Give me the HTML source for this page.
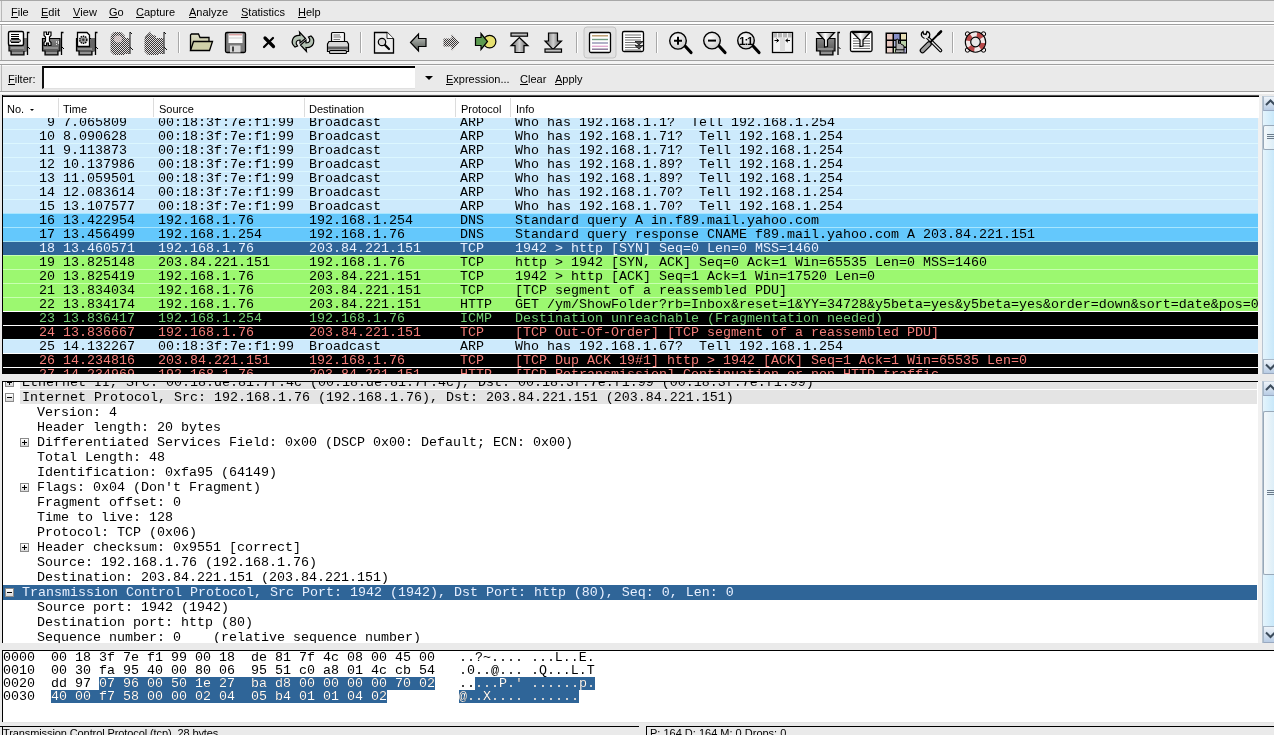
<!DOCTYPE html>
<html><head><meta charset="utf-8"><title>Wireshark</title><style>
*{margin:0;padding:0;box-sizing:border-box}
html,body{width:1274px;height:735px;overflow:hidden;background:#eaeaea;font-family:"Liberation Sans",sans-serif;font-size:11px;color:#000}
body{position:relative;will-change:transform}
.a{position:absolute}
.t{position:absolute;white-space:pre;line-height:13px}
.m{font-family:"Liberation Mono",monospace;font-size:13.33px}
u{text-decoration:none;position:relative}
u:after{content:"";position:absolute;left:0;right:0;bottom:0px;height:1px;background:#000}
.r{position:absolute;left:1px;width:1255px;height:14px;line-height:14px;white-space:pre;font-family:"Liberation Mono",monospace;font-size:13.33px}
.r b{font-weight:normal;position:absolute;top:0}
.arp{background:#cdeafc;color:#000}
.dns{background:#64c8fc;color:#000}
.sel{background:#2f6598;color:#eaf2ff}
.tcp{background:#9cf870;color:#000}
.icmp{background:#000;color:#76d076}
.bad{background:#000;color:#f47f7a}
.sep{position:absolute;left:1px;width:1255px;height:1px}
.d{position:absolute;left:1px;width:1254px;height:14px;line-height:14px;white-space:pre;font-family:"Liberation Mono",monospace;font-size:13.33px}
.d b{font-weight:normal;position:absolute;top:1px}
.d.hl:before{content:"";position:absolute;left:17px;right:0;top:0;bottom:0;background:#e4e4e4}
.d.sel{background:#2f6598;color:#e8f0ff}
.ex{position:absolute;top:3px;width:9px;height:9px;border:1px solid #8a8a8a;background:linear-gradient(#fff,#d8d8d8)}
.ex:before{content:"";position:absolute;left:1px;top:3px;width:5px;height:1px;background:#000}
.ex.plus:after{content:"";position:absolute;left:3px;top:1px;width:1px;height:5px;background:#000}
.hx{position:absolute;white-space:pre;line-height:13px;font-family:"Liberation Mono",monospace;font-size:13.33px}
.hs{position:absolute;background:#2f6598;height:13px}
</style></head><body>
<div class="a" style="left:0;top:0;width:1274px;height:1px;background:#a8a8a8"></div>
<div class="a" style="left:1px;top:1px;width:1px;height:20px;background:#b8b8b8"></div>
<div class="a" style="left:0;top:21px;width:1274px;height:1px;background:#a0a0a0"></div>
<div class="a" style="left:0;top:22px;width:1274px;height:2px;background:#fff"></div>
<div class="a" style="left:0;top:24px;width:1274px;height:1px;background:#a0a0a0"></div>
<div class="a" style="left:0;top:25px;width:1274px;height:1px;background:#fafafa"></div>
<div class="t" style="left:11px;top:6px"><u>F</u>ile</div>
<div class="t" style="left:41px;top:6px"><u>E</u>dit</div>
<div class="t" style="left:73px;top:6px"><u>V</u>iew</div>
<div class="t" style="left:109px;top:6px"><u>G</u>o</div>
<div class="t" style="left:136px;top:6px"><u>C</u>apture</div>
<div class="t" style="left:189px;top:6px"><u>A</u>nalyze</div>
<div class="t" style="left:241px;top:6px"><u>S</u>tatistics</div>
<div class="t" style="left:298px;top:6px"><u>H</u>elp</div>
<div class="a" style="left:1px;top:25px;width:1px;height:35px;background:#b8b8b8"></div>
<div class="a" style="left:0;top:60px;width:1274px;height:1px;background:#a0a0a0"></div>
<div class="a" style="left:0;top:61px;width:1274px;height:3px;background:#f4f4f4"></div>
<div class="a" style="left:0;top:64px;width:1274px;height:1px;background:#a0a0a0"></div>
<div class="a" style="left:0;top:65px;width:1274px;height:1px;background:#fafafa"></div>
<svg class="a" style="left:0;top:0" width="1274" height="62" viewBox="0 0 1274 62">
<defs>
<pattern id="chk" width="2" height="2" patternUnits="userSpaceOnUse"><rect width="2" height="2" fill="#e4dede"/><rect width="1" height="1" fill="#383838"/><rect x="1" y="1" width="1" height="1" fill="#383838"/></pattern>
<linearGradient id="cardg" x1="0" y1="0" x2="0" y2="1"><stop offset="0" stop-color="#888"/><stop offset="1" stop-color="#484848"/></linearGradient>
<linearGradient id="arrg" x1="0" y1="0" x2="0" y2="1"><stop offset="0" stop-color="#c8ccc8"/><stop offset="1" stop-color="#505550"/></linearGradient>
<linearGradient id="arrg2" x1="0" y1="0" x2="1" y2="0"><stop offset="0" stop-color="#606060"/><stop offset=".5" stop-color="#d0d0d0"/><stop offset="1" stop-color="#505050"/></linearGradient>
<radialGradient id="lens" cx=".4" cy=".35" r=".7"><stop offset="0" stop-color="#ffffff"/><stop offset="1" stop-color="#c8c8c8"/></radialGradient>
<linearGradient id="fold" x1="0" y1="0" x2="0" y2="1"><stop offset="0" stop-color="#e0e0c8"/><stop offset="1" stop-color="#b8b890"/></linearGradient>
<linearGradient id="funnel" x1="0" y1="0" x2="1" y2="0"><stop offset="0" stop-color="#707070"/><stop offset=".45" stop-color="#ffffff"/><stop offset="1" stop-color="#808080"/></linearGradient>
</defs>
<!-- separators -->
<g stroke="#a8a8a8" stroke-width="1">
<line x1="178.5" y1="32" x2="178.5" y2="53"/><line x1="360.5" y1="32" x2="360.5" y2="53"/><line x1="576.5" y1="32" x2="576.5" y2="53"/>
<line x1="656.5" y1="32" x2="656.5" y2="53"/><line x1="805.5" y1="32" x2="805.5" y2="53"/><line x1="952.5" y1="32" x2="952.5" y2="53"/>
</g>
<g stroke="#fff" stroke-width="1">
<line x1="179.5" y1="32" x2="179.5" y2="53"/><line x1="361.5" y1="32" x2="361.5" y2="53"/><line x1="577.5" y1="32" x2="577.5" y2="53"/>
<line x1="657.5" y1="32" x2="657.5" y2="53"/><line x1="806.5" y1="32" x2="806.5" y2="53"/><line x1="953.5" y1="32" x2="953.5" y2="53"/>
</g>
<!-- 1 interface list -->
<g transform="translate(4,27)">
<path d="M5 18 H22 V24 H20 V28 H7 V24 H5 Z" fill="url(#cardg)" stroke="#000" stroke-width="1.2"/>
<rect x="19" y="11" width="4" height="13" fill="#777"/>
<line x1="7" y1="21" x2="20" y2="21" stroke="#bbb" stroke-width="1"/>
<line x1="8" y1="26" x2="19" y2="26" stroke="#ccc" stroke-width="1"/>
<rect x="4.5" y="4.5" width="15" height="14" rx="1.5" fill="#fff" stroke="#000" stroke-width="1.4"/>
<g stroke="#000" stroke-width="1"><line x1="7" y1="7.5" x2="15" y2="7.5"/><line x1="7" y1="9.5" x2="15" y2="9.5"/><line x1="7" y1="11.5" x2="15" y2="11.5"/><line x1="7" y1="15.5" x2="15" y2="15.5"/></g>
<rect x="6.5" y="12.5" width="10" height="2.5" rx="1.2" fill="#aaa" stroke="#000" stroke-width=".8"/>
<path d="M23.5 28 V5.5 H25.5" fill="none" stroke="#000" stroke-width="1.3"/>
<path d="M24 20 L26 22" stroke="#000" stroke-width="1"/>
</g>
<!-- 2 capture options -->
<g transform="translate(38,27)">
<path d="M4.5 11.5 H22 V24 H20 V28 H7 V24 H4.5 Z" fill="url(#cardg)" stroke="#000" stroke-width="1.2"/>
<line x1="6" y1="21" x2="20" y2="21" stroke="#bbb"/><line x1="8" y1="26" x2="19" y2="26" stroke="#ccc"/>
<g fill="#ddd"><rect x="18" y="14" width="1" height="2"/><rect x="20" y="14" width="1" height="3"/><rect x="18" y="17" width="1" height="1"/></g>
<path d="M6 5 H8.5 V7.5 H10.5 V5 H13 V8.5 L11.5 10 V14 L13 15.5 V18.5 H10.5 V16 H8.5 V18.5 H6 V15.5 L7.5 14 V10 L6 8.5 Z" fill="#fff" stroke="#000" stroke-width="1.2"/>
<path d="M23.5 28 V5.5 H25.5" fill="none" stroke="#000" stroke-width="1.3"/>
<path d="M24 20 L26 22" stroke="#000" stroke-width="1"/>
</g>
<!-- 3 start capture -->
<g transform="translate(72,27)">
<path d="M4.5 11.5 H22 V24 H20 V28 H7 V24 H4.5 Z" fill="url(#cardg)" stroke="#000" stroke-width="1.2"/>
<rect x="19" y="11" width="4" height="13" fill="#666"/>
<line x1="6" y1="22" x2="20" y2="22" stroke="#bbb"/><line x1="8" y1="26" x2="19" y2="26" stroke="#ccc"/>
<path d="M5.5 5.5 H15 L17.5 8 V19.5 H5.5 Z" fill="#fbfbfb" stroke="#000" stroke-width="1.3"/>
<circle cx="11.3" cy="12.8" r="3.6" fill="#999" stroke="#000" stroke-width="1.4" stroke-dasharray="1.4 .9"/>
<circle cx="11.3" cy="12.8" r="1.2" fill="#333"/>
<path d="M23.5 28 V5.5 H25.5" fill="none" stroke="#000" stroke-width="1.3"/>
<path d="M24 20 L26 22" stroke="#000" stroke-width="1"/>
</g>
<!-- 4 stop (grayed) -->
<g transform="translate(106,27)">
<path d="M8 5 H15 L19 9 V11 H23.5 V27 H19 V28 H8 L4.5 24.5 V12 L5 8 Z" fill="url(#chk)"/>
<ellipse cx="12" cy="12" rx="4" ry="3.5" fill="#e8d8d8" opacity=".75"/>
<path d="M24 5 L26 7 M24 5 V27 M24 20 L27 23" stroke="#111" stroke-width="1" fill="none"/>
</g>
<!-- 5 restart (grayed) -->
<g transform="translate(140,27)">
<path d="M10 4 L11 7 L16 9 V11 H23.5 V27 H19 V28 H8 L4.5 24.5 V12 L5 10 Z" fill="url(#chk)"/>
<path d="M5 11 L10 5" stroke="#777" stroke-width="1"/>
<path d="M24 5 L26 7 M24 5 V27 M24 20 L27 23" stroke="#111" stroke-width="1" fill="none"/>
</g>
<!-- 6 open folder -->
<g>
<path d="M190.5 50.5 V35 L191.5 34 H198.5 L200 37.5 H209 V41.5" fill="url(#fold)" stroke="#000" stroke-width="1.3"/>
<path d="M190.5 50.5 L193.5 41.5 H212.5 L209.5 50.5 Z" fill="#cfd0a8" stroke="#000" stroke-width="1.3"/>
</g>
<!-- 7 save -->
<g>
<rect x="225.5" y="32.5" width="20" height="20" rx="1.5" fill="#7c7c7c" stroke="#000" stroke-width="1.3"/>
<rect x="228.5" y="33.5" width="14" height="9.5" fill="#fbfbfb"/>
<line x1="229" y1="34.8" x2="242" y2="34.8" stroke="#d08080" stroke-width="1"/>
<line x1="229" y1="38" x2="242" y2="38" stroke="#c0c0c0" stroke-width=".8"/>
<rect x="230" y="45.5" width="10.5" height="7" fill="#d8d8d8"/>
<rect x="232" y="46.5" width="2" height="5" fill="#404040"/>
</g>
<!-- 8 close X -->
<g stroke="#000" stroke-linecap="round">
<line x1="265" y1="38" x2="273.5" y2="46.5" stroke-width="3.2"/>
<line x1="273" y1="38" x2="264" y2="47" stroke-width="2.2"/>
</g>
<!-- 9 reload -->
<g stroke="#000" stroke-width="1.2" fill="#b4c2b4">
<path d="M295 47 C290 43 292 35 300 35.5 L299.5 32 L305.5 38.5 L300 43 L300 40 C296 40 295 43 297.5 46 Z"/>
<path d="M311 36 C316 40 314 48 306 47.5 L306.5 51.5 L300.5 45 L306 40 L306 43 C310 43 311 40 308.5 37 Z"/>
</g>
<!-- 10 print -->
<g>
<rect x="331.5" y="32.5" width="13" height="10.5" rx="1" fill="#f4f4f4" stroke="#000" stroke-width="1.2"/>
<g stroke="#666" stroke-width=".9"><line x1="333.5" y1="35" x2="340" y2="35"/><line x1="333.5" y1="37" x2="341" y2="37"/><line x1="333.5" y1="39.5" x2="340" y2="39.5"/><line x1="333.5" y1="41.5" x2="341" y2="41.5"/></g>
<path d="M329 41.5 H347 L348.5 44 V51.5 H327.5 V44 Z" fill="#d8d8d8" stroke="#000" stroke-width="1.2"/>
<rect x="328" y="46.5" width="20" height="3" fill="#606060"/>
<rect x="329.5" y="50.5" width="17" height="3" rx="1" fill="#c8c8c8" stroke="#000" stroke-width="1.1"/>
</g>
<!-- 11 find -->
<g>
<path d="M374.5 32.5 H387 L393.5 39 V53 H374.5 Z" fill="#ececec" stroke="#000" stroke-width="1.3"/>
<path d="M387 32.5 V38.5 H393.5" fill="#fff" stroke="#000" stroke-width=".8"/>
<line x1="384.5" y1="44.5" x2="389" y2="49" stroke="#000" stroke-width="2.2" stroke-linecap="round"/>
<circle cx="382" cy="42" r="3.7" fill="#d8d8d8" stroke="#000" stroke-width="1.2"/>
</g>
<!-- 12 back -->
<path d="M410.5 42.5 L418.5 34 V38.5 H426 V46.5 H418.5 V51 Z" fill="url(#arrg)" stroke="#000" stroke-width="1.2"/>
<!-- 13 forward grayed -->
<path d="M459.5 42.5 L451.5 34 V38.5 H443.5 V46.5 H451.5 V51 Z" fill="url(#chk)"/>
<!-- 14 go to packet -->
<g>
<circle cx="489.6" cy="41.6" r="6.3" fill="#e6e070" stroke="#000" stroke-width="1.2"/>
<path d="M475.5 37.5 H481 V33.5 L487.5 41.5 L481 49.5 V45.5 H475.5 Z" fill="#5c9a50" stroke="#000" stroke-width="1.2"/>
</g>
<!-- 15 first packet -->
<g stroke="#000" stroke-width="1.2">
<rect x="511" y="33" width="16.5" height="3.2" fill="#c0c0c0"/>
<path d="M519.3 37.5 L528 45.7 H524 V52.5 H515 V45.7 H511 Z" fill="url(#arrg2)"/>
</g>
<!-- 16 last packet -->
<g stroke="#000" stroke-width="1.2">
<path d="M548.5 33 H557.5 V41 H561.5 L553 49.5 L545 41 H548.5 Z" fill="url(#arrg2)"/>
<rect x="545" y="49" width="16.5" height="3.2" fill="#c0c0c0"/>
</g>
<!-- 17 colorize (pressed) -->
<rect x="584" y="27" width="32" height="31" rx="3" fill="#e2e2e2" stroke="#c4c4c4" stroke-width="1"/>
<g>
<rect x="589.5" y="32.5" width="21" height="20" rx="1.5" fill="#fff" stroke="#000" stroke-width="1.3"/>
<g stroke-width="1.4"><line x1="592" y1="35.8" x2="608" y2="35.8" stroke="#b89868"/><line x1="592" y1="39.5" x2="608" y2="39.5" stroke="#709a80"/><line x1="592" y1="43" x2="608" y2="43" stroke="#9090b0"/><line x1="592" y1="46.3" x2="608" y2="46.3" stroke="#e0a8d0"/><line x1="592" y1="49.2" x2="608" y2="49.2" stroke="#807090"/></g>
</g>
<!-- 18 autoscroll -->
<g>
<rect x="622.5" y="31.5" width="21" height="20" rx="1.5" fill="#fff" stroke="#000" stroke-width="1.3"/>
<g stroke="#707070" stroke-width="1"><line x1="625" y1="35" x2="641" y2="35"/><line x1="625" y1="37.5" x2="641" y2="37.5"/><line x1="625" y1="40" x2="641" y2="40"/><line x1="625" y1="42.5" x2="636" y2="42.5"/><line x1="625" y1="45" x2="636" y2="45"/><line x1="625" y1="47.5" x2="641" y2="47.5"/><line x1="625" y1="50" x2="641" y2="50"/></g>
<path d="M635 41.5 H643 L639 45 Z M635 45.5 H643 L639 49 Z" fill="#505050" stroke="#000" stroke-width=".7"/>
</g>
<!-- 19 zoom in -->
<g>
<line x1="685.5" y1="46.5" x2="691" y2="52.5" stroke="#000" stroke-width="3.2" stroke-linecap="round"/>
<circle cx="678" cy="40.8" r="8.3" fill="url(#lens)" stroke="#000" stroke-width="1.4"/>
<path d="M674 40.8 H682 M678 36.8 V44.8" stroke="#000" stroke-width="2"/>
</g>
<!-- 20 zoom out -->
<g>
<line x1="719.5" y1="46.5" x2="725" y2="52.5" stroke="#000" stroke-width="3.2" stroke-linecap="round"/>
<circle cx="712" cy="40.6" r="8.3" fill="url(#lens)" stroke="#000" stroke-width="1.4"/>
<path d="M708 40.6 H716" stroke="#000" stroke-width="2"/>
</g>
<!-- 21 zoom 1:1 -->
<g>
<line x1="753.5" y1="46.5" x2="759" y2="52.5" stroke="#000" stroke-width="3.2" stroke-linecap="round"/>
<circle cx="746" cy="40.6" r="8.3" fill="url(#lens)" stroke="#000" stroke-width="1.4"/>
<text x="745.8" y="45" font-family="Liberation Sans" font-size="11" font-weight="bold" text-anchor="middle" fill="#000" letter-spacing="-1">1:1</text>
</g>
<!-- 22 resize columns -->
<g>
<rect x="772.5" y="32.5" width="20" height="20" fill="#f4f4f4" stroke="#000" stroke-width="1.3"/>
<rect x="773" y="33" width="19" height="4.5" fill="#b8b8b8"/>
<g stroke="#fff" stroke-width=".8"><line x1="777.5" y1="33" x2="777.5" y2="37.5"/><line x1="782.5" y1="33" x2="782.5" y2="37.5"/><line x1="787.5" y1="33" x2="787.5" y2="37.5"/></g>
<rect x="780" y="38" width="5" height="14" fill="#dcdcdc"/>
<path d="M774.5 40.5 H778.5 M776.5 38.8 L778.8 40.5 L776.5 42.2 M790 40.5 H786 M788 38.8 L785.7 40.5 L788 42.2" stroke="#000" stroke-width="1" fill="none"/>
</g>
<!-- 23 capture filters -->
<g transform="translate(812,27)">
<path d="M4.5 11.5 H23 V24 H21 V28 H8 V24 H4.5 Z" fill="url(#cardg)" stroke="#000" stroke-width="1.2"/>
<line x1="6" y1="22" x2="21" y2="22" stroke="#bbb"/><line x1="9" y1="26" x2="20" y2="26" stroke="#ccc"/>
<path d="M5.5 5.5 H22.5 L15.5 13 V19.5 L12.5 20 V13 Z" fill="url(#funnel)" stroke="#000" stroke-width="1.2"/>
<path d="M26 28 V5.5 H28" fill="none" stroke="#000" stroke-width="1.3"/>
<path d="M26.5 20 L28.5 22" stroke="#000" stroke-width="1"/>
</g>
<!-- 24 display filters -->
<g>
<rect x="850.5" y="31.5" width="21.5" height="20" rx="1.5" fill="#fff" stroke="#000" stroke-width="1.3"/>
<g stroke="#707070" stroke-width="1"><line x1="853" y1="38.5" x2="870" y2="38.5"/><line x1="853" y1="41" x2="870" y2="41"/><line x1="853" y1="43.5" x2="870" y2="43.5"/><line x1="853" y1="46" x2="870" y2="46"/><line x1="853" y1="48.5" x2="870" y2="48.5"/></g>
<path d="M852.5 32.5 H870 L863 40 V46 L860 46.5 V40 Z" fill="url(#funnel)" stroke="#000" stroke-width="1.2"/>
</g>
<!-- 25 coloring rules -->
<g>
<rect x="885.5" y="32.5" width="21.5" height="21" fill="#000"/>
<g>
<rect x="887" y="34" width="5.5" height="5.5" fill="#e8c8c0"/><rect x="894" y="34" width="5.5" height="5.5" fill="#8890c8"/><rect x="901" y="34" width="5" height="5.5" fill="#e8e0b8"/>
<rect x="887" y="41" width="5.5" height="5.5" fill="#e8c8c0"/><rect x="894" y="41" width="5.5" height="5.5" fill="#b0b8d8"/><rect x="901" y="41" width="5" height="5.5" fill="#b8d0a8"/>
<rect x="887" y="48" width="5.5" height="4.5" fill="#e8d0c8"/><rect x="894" y="48" width="5.5" height="4.5" fill="#c8e0b8"/><rect x="901" y="48" width="5" height="4.5" fill="#a8a8d0"/>
</g>
<path d="M896 50 V41 C896 38.5 898.5 38.5 898.5 41 V43.5 C900 43 901.5 43.5 902 45 C903 44.5 904 45.5 904 47 V50 Z" fill="#b0b0b0" stroke="#000" stroke-width="1"/>
<rect x="895.5" y="50" width="8.5" height="2.2" fill="#d8d8d8" stroke="#000" stroke-width=".8"/>
</g>
<!-- 26 preferences -->
<g>
<path d="M926.5 36.5 L940.5 50.5" stroke="#000" stroke-width="3.6" stroke-linecap="round"/>
<path d="M926.5 36.5 L940.5 50.5" stroke="#e8e8e8" stroke-width="1.4" stroke-linecap="round"/>
<path d="M928 38 C931 36 930 32 927 31.5 L926 34.5 L923.5 34 L923 31.5 C920.5 33 920.5 37 924.5 38.5" fill="#e8e8e8" stroke="#000" stroke-width="1.3"/>
<line x1="929" y1="43.5" x2="939" y2="33.5" stroke="#000" stroke-width="1.8"/>
<line x1="938.5" y1="34" x2="941" y2="31.5" stroke="#000" stroke-width="2.6" stroke-linecap="round"/>
<line x1="922.5" y1="50.5" x2="929" y2="44" stroke="#000" stroke-width="5.6" stroke-linecap="round"/>
<line x1="922.5" y1="50.5" x2="929" y2="44" stroke="#a0a0a0" stroke-width="3.2" stroke-linecap="round"/>
</g>
<!-- 27 help -->
<g>
<circle cx="967.5" cy="34" r="2.2" fill="#f0e8e8" stroke="#000" stroke-width="1"/><circle cx="983.5" cy="34" r="2.2" fill="#f0e8e8" stroke="#000" stroke-width="1"/>
<circle cx="967.5" cy="50" r="2.2" fill="#f0e8e8" stroke="#000" stroke-width="1"/><circle cx="983.5" cy="50" r="2.2" fill="#f0e8e8" stroke="#000" stroke-width="1"/>
<circle cx="975.5" cy="42" r="7.6" fill="none" stroke="#f2e8e8" stroke-width="5"/>
<circle cx="975.5" cy="42" r="7.6" fill="none" stroke="#b84848" stroke-width="5" stroke-dasharray="6 6" stroke-dashoffset="-1"/>
<circle cx="975.5" cy="42" r="10.2" fill="none" stroke="#000" stroke-width="1.1"/>
<circle cx="975.5" cy="42" r="4.8" fill="#e8e8e8" stroke="#000" stroke-width="1.2"/>
</g>
</svg>

<div class="a" style="left:1px;top:65px;width:1px;height:26px;background:#b8b8b8"></div>
<div class="t" style="left:8px;top:73px"><u>F</u>ilter:</div>
<div class="a" style="left:42px;top:66px;width:373px;height:23px;background:#fff;border-top:2px solid #000;border-left:2px solid #111;border-bottom:1px solid #e0e0e0"></div>
<div class="a" style="left:425px;top:76px;width:0;height:0;border-left:4px solid transparent;border-right:4px solid transparent;border-top:4px solid #000"></div>
<div class="t" style="left:446px;top:73px"><u>E</u>xpression...</div>
<div class="t" style="left:520px;top:73px"><u>C</u>lear</div>
<div class="t" style="left:555px;top:73px"><u>A</u>pply</div>
<div class="a" style="left:0;top:91px;width:1274px;height:1px;background:#a0a0a0"></div>
<div class="a" style="left:0;top:92px;width:1274px;height:2px;background:#fafafa"></div>
<div class="a" style="left:2px;top:95px;width:1257px;height:279px;background:#fff;overflow:hidden"><div class="a" style="left:0;top:2px;width:1257px;height:21px;background:#fff;z-index:2"></div>
<div class="t" style="z-index:3;left:5px;top:8px">No.</div>
<div class="t" style="z-index:3;left:61px;top:8px">Time</div>
<div class="t" style="z-index:3;left:157px;top:8px">Source</div>
<div class="t" style="z-index:3;left:307px;top:8px">Destination</div>
<div class="t" style="z-index:3;left:459px;top:8px">Protocol</div>
<div class="t" style="z-index:3;left:514px;top:8px">Info</div>
<div class="a" style="z-index:3;left:56px;top:3px;width:1px;height:19px;background:#dcdcdc"></div>
<div class="a" style="z-index:3;left:151px;top:3px;width:1px;height:19px;background:#dcdcdc"></div>
<div class="a" style="z-index:3;left:302px;top:3px;width:1px;height:19px;background:#dcdcdc"></div>
<div class="a" style="z-index:3;left:453px;top:3px;width:1px;height:19px;background:#dcdcdc"></div>
<div class="a" style="z-index:3;left:508px;top:3px;width:1px;height:19px;background:#dcdcdc"></div>
<div class="a" style="z-index:3;left:28px;top:14px;width:0;height:0;border-left:2.5px solid transparent;border-right:2.5px solid transparent;border-top:2.5px solid #000"></div>
<div class="r arp" style="top:21px;height:13px"><b style="left:44px">9</b><b style="left:60px">7.065809</b><b style="left:155px">00:18:3f:7e:f1:99</b><b style="left:306px">Broadcast</b><b style="left:457px">ARP</b><b style="left:512px">Who has 192.168.1.1?  Tell 192.168.1.254</b></div>
<div class="sep" style="top:20px;left:1px;background:#dcf7ff"></div>
<div class="r arp" style="top:35px;height:13px"><b style="left:36px">10</b><b style="left:60px">8.090628</b><b style="left:155px">00:18:3f:7e:f1:99</b><b style="left:306px">Broadcast</b><b style="left:457px">ARP</b><b style="left:512px">Who has 192.168.1.71?  Tell 192.168.1.254</b></div>
<div class="sep" style="top:34px;left:1px;background:#dcf7ff"></div>
<div class="r arp" style="top:49px;height:13px"><b style="left:36px">11</b><b style="left:60px">9.113873</b><b style="left:155px">00:18:3f:7e:f1:99</b><b style="left:306px">Broadcast</b><b style="left:457px">ARP</b><b style="left:512px">Who has 192.168.1.71?  Tell 192.168.1.254</b></div>
<div class="sep" style="top:48px;left:1px;background:#dcf7ff"></div>
<div class="r arp" style="top:63px;height:13px"><b style="left:36px">12</b><b style="left:60px">10.137986</b><b style="left:155px">00:18:3f:7e:f1:99</b><b style="left:306px">Broadcast</b><b style="left:457px">ARP</b><b style="left:512px">Who has 192.168.1.89?  Tell 192.168.1.254</b></div>
<div class="sep" style="top:62px;left:1px;background:#dcf7ff"></div>
<div class="r arp" style="top:77px;height:13px"><b style="left:36px">13</b><b style="left:60px">11.059501</b><b style="left:155px">00:18:3f:7e:f1:99</b><b style="left:306px">Broadcast</b><b style="left:457px">ARP</b><b style="left:512px">Who has 192.168.1.89?  Tell 192.168.1.254</b></div>
<div class="sep" style="top:76px;left:1px;background:#dcf7ff"></div>
<div class="r arp" style="top:91px;height:13px"><b style="left:36px">14</b><b style="left:60px">12.083614</b><b style="left:155px">00:18:3f:7e:f1:99</b><b style="left:306px">Broadcast</b><b style="left:457px">ARP</b><b style="left:512px">Who has 192.168.1.70?  Tell 192.168.1.254</b></div>
<div class="sep" style="top:90px;left:1px;background:#dcf7ff"></div>
<div class="r arp" style="top:105px;height:13px"><b style="left:36px">15</b><b style="left:60px">13.107577</b><b style="left:155px">00:18:3f:7e:f1:99</b><b style="left:306px">Broadcast</b><b style="left:457px">ARP</b><b style="left:512px">Who has 192.168.1.70?  Tell 192.168.1.254</b></div>
<div class="sep" style="top:104px;left:1px;background:#dcf7ff"></div>
<div class="r dns" style="top:119px;height:13px"><b style="left:36px">16</b><b style="left:60px">13.422954</b><b style="left:155px">192.168.1.76</b><b style="left:306px">192.168.1.254</b><b style="left:457px">DNS</b><b style="left:512px">Standard query A in.f89.mail.yahoo.com</b></div>
<div class="sep" style="top:118px;left:1px;background:#a8e6ff"></div>
<div class="r dns" style="top:133px;height:13px"><b style="left:36px">17</b><b style="left:60px">13.456499</b><b style="left:155px">192.168.1.254</b><b style="left:306px">192.168.1.76</b><b style="left:457px">DNS</b><b style="left:512px">Standard query response CNAME f89.mail.yahoo.com A 203.84.221.151</b></div>
<div class="sep" style="top:132px;left:1px;background:#a8e6ff"></div>
<div class="r sel" style="top:147px;height:13px"><b style="left:36px">18</b><b style="left:60px">13.460571</b><b style="left:155px">192.168.1.76</b><b style="left:306px">203.84.221.151</b><b style="left:457px">TCP</b><b style="left:512px">1942 &gt; http [SYN] Seq=0 Len=0 MSS=1460</b></div>
<div class="sep" style="top:146px;left:1px;background:#a0e0f0"></div>
<div class="r tcp" style="top:161px;height:13px"><b style="left:36px">19</b><b style="left:60px">13.825148</b><b style="left:155px">203.84.221.151</b><b style="left:306px">192.168.1.76</b><b style="left:457px">TCP</b><b style="left:512px">http &gt; 1942 [SYN, ACK] Seq=0 Ack=1 Win=65535 Len=0 MSS=1460</b></div>
<div class="sep" style="top:160px;left:1px;background:#c8ffb0"></div>
<div class="r tcp" style="top:175px;height:13px"><b style="left:36px">20</b><b style="left:60px">13.825419</b><b style="left:155px">192.168.1.76</b><b style="left:306px">203.84.221.151</b><b style="left:457px">TCP</b><b style="left:512px">1942 &gt; http [ACK] Seq=1 Ack=1 Win=17520 Len=0</b></div>
<div class="sep" style="top:174px;left:1px;background:#c8ffb0"></div>
<div class="r tcp" style="top:189px;height:13px"><b style="left:36px">21</b><b style="left:60px">13.834034</b><b style="left:155px">192.168.1.76</b><b style="left:306px">203.84.221.151</b><b style="left:457px">TCP</b><b style="left:512px">[TCP segment of a reassembled PDU]</b></div>
<div class="sep" style="top:188px;left:1px;background:#c8ffb0"></div>
<div class="r tcp" style="top:203px;height:13px"><b style="left:36px">22</b><b style="left:60px">13.834174</b><b style="left:155px">192.168.1.76</b><b style="left:306px">203.84.221.151</b><b style="left:457px">HTTP</b><b style="left:512px">GET /ym/ShowFolder?rb=Inbox&amp;reset=1&amp;YY=34728&amp;y5beta=yes&amp;y5beta=yes&amp;order=down&amp;sort=date&amp;pos=0</b></div>
<div class="sep" style="top:202px;left:1px;background:#c8ffb0"></div>
<div class="r icmp" style="top:217px;height:13px"><b style="left:36px">23</b><b style="left:60px">13.836417</b><b style="left:155px">192.168.1.254</b><b style="left:306px">192.168.1.76</b><b style="left:457px">ICMP</b><b style="left:512px">Destination unreachable (Fragmentation needed)</b></div>
<div class="sep" style="top:216px;left:1px;background:#fff"></div>
<div class="r bad" style="top:231px;height:13px"><b style="left:36px">24</b><b style="left:60px">13.836667</b><b style="left:155px">192.168.1.76</b><b style="left:306px">203.84.221.151</b><b style="left:457px">TCP</b><b style="left:512px">[TCP Out-Of-Order] [TCP segment of a reassembled PDU]</b></div>
<div class="sep" style="top:230px;left:1px;background:#fff"></div>
<div class="r arp" style="top:245px;height:13px"><b style="left:36px">25</b><b style="left:60px">14.132267</b><b style="left:155px">00:18:3f:7e:f1:99</b><b style="left:306px">Broadcast</b><b style="left:457px">ARP</b><b style="left:512px">Who has 192.168.1.67?  Tell 192.168.1.254</b></div>
<div class="sep" style="top:244px;left:1px;background:#dcf7ff"></div>
<div class="r bad" style="top:259px;height:13px"><b style="left:36px">26</b><b style="left:60px">14.234816</b><b style="left:155px">203.84.221.151</b><b style="left:306px">192.168.1.76</b><b style="left:457px">TCP</b><b style="left:512px">[TCP Dup ACK 19#1] http &gt; 1942 [ACK] Seq=1 Ack=1 Win=65535 Len=0</b></div>
<div class="sep" style="top:258px;left:1px;background:#fff"></div>
<div class="r bad" style="top:273px;height:13px"><b style="left:36px">27</b><b style="left:60px">14.234969</b><b style="left:155px">192.168.1.76</b><b style="left:306px">203.84.221.151</b><b style="left:457px">HTTP</b><b style="left:512px">[TCP Retransmission] Continuation or non-HTTP traffic</b></div>
<div class="sep" style="top:272px;left:1px;background:#fff"></div></div>
<div class="a" style="z-index:5;left:2px;top:95px;width:1257px;height:1px;background:#555"></div><div class="a" style="z-index:5;left:2px;top:96px;width:1257px;height:1px;background:#000"></div>
<div class="a" style="z-index:5;left:2px;top:95px;width:1px;height:279px;background:#000"></div>
<div class="a" style="left:1258px;top:96px;width:4px;height:278px;background:#f1f1f1"></div>
<div class="a" style="left:1262px;top:96px;width:1px;height:278px;background:#b8c4d0"></div>
<div class="a" style="left:1263px;top:96px;width:11px;height:278px;background:linear-gradient(90deg,#e4f4fc,#c8e8fa)"></div>
<div class="a" style="left:1263px;top:96px;width:11px;height:15px;background:linear-gradient(#eef4fa,#b8cce4);border-top:1px solid #c8d4e0;border-left:1px solid #a8b8c8;border-bottom:1px solid #98a8c0"></div>
<svg class="a" style="left:1263px;top:96px" width="11" height="15"><path d="M3 9 L7.5 4.5 L12 9" fill="none" stroke="#3c4c5c" stroke-width="2"/></svg>
<div class="a" style="left:1263px;top:125px;width:11px;height:25px;background:linear-gradient(90deg,#f4f8fa,#dceef8);border:1px solid #98a8b8;border-right:none;border-radius:2px 0 0 2px"></div>
<div class="a" style="left:1267px;top:134px;width:7px;height:1px;background:#6a7a8a;box-shadow:0 2px 0 #6a7a8a,0 4px 0 #6a7a8a"></div>
<div class="a" style="left:1263px;top:359px;width:11px;height:15px;background:linear-gradient(#eef4fa,#b8cce4);border-top:1px solid #a8b8c8;border-left:1px solid #a8b8c8;border-bottom:1px solid #98a8c0"></div>
<svg class="a" style="left:1263px;top:359px" width="11" height="15"><path d="M3 5.5 L7.5 10.0 L12 5.5" fill="none" stroke="#3c4c5c" stroke-width="2"/></svg>
<div class="a" style="left:2px;top:381px;width:1257px;height:262px;background:#fff;overflow:hidden"><div class="d hl" style="top:-6px;height:14px"><i class="ex plus" style="left:2px"></i><b style="left:19px">Ethernet II, Src: 00:18:de:81:7f:4c (00:18:de:81:7f:4c), Dst: 00:18:3f:7e:f1:99 (00:18:3f:7e:f1:99)</b></div>
<div class="d hl" style="top:9px;height:14px"><i class="ex minus" style="left:2px"></i><b style="left:19px">Internet Protocol, Src: 192.168.1.76 (192.168.1.76), Dst: 203.84.221.151 (203.84.221.151)</b></div>
<div class="d " style="top:24px;height:14px"><b style="left:34px">Version: 4</b></div>
<div class="d " style="top:39px;height:14px"><b style="left:34px">Header length: 20 bytes</b></div>
<div class="d " style="top:54px;height:14px"><i class="ex plus" style="left:17px"></i><b style="left:34px">Differentiated Services Field: 0x00 (DSCP 0x00: Default; ECN: 0x00)</b></div>
<div class="d " style="top:69px;height:14px"><b style="left:34px">Total Length: 48</b></div>
<div class="d " style="top:84px;height:14px"><b style="left:34px">Identification: 0xfa95 (64149)</b></div>
<div class="d " style="top:99px;height:14px"><i class="ex plus" style="left:17px"></i><b style="left:34px">Flags: 0x04 (Don&#x27;t Fragment)</b></div>
<div class="d " style="top:114px;height:14px"><b style="left:34px">Fragment offset: 0</b></div>
<div class="d " style="top:129px;height:14px"><b style="left:34px">Time to live: 128</b></div>
<div class="d " style="top:144px;height:14px"><b style="left:34px">Protocol: TCP (0x06)</b></div>
<div class="d " style="top:159px;height:14px"><i class="ex plus" style="left:17px"></i><b style="left:34px">Header checksum: 0x9551 [correct]</b></div>
<div class="d " style="top:174px;height:14px"><b style="left:34px">Source: 192.168.1.76 (192.168.1.76)</b></div>
<div class="d " style="top:189px;height:14px"><b style="left:34px">Destination: 203.84.221.151 (203.84.221.151)</b></div>
<div class="d sel" style="top:204px;height:15px"><i class="ex minus" style="left:2px"></i><b style="left:19px">Transmission Control Protocol, Src Port: 1942 (1942), Dst Port: http (80), Seq: 0, Len: 0</b></div>
<div class="d " style="top:219px;height:14px"><b style="left:34px">Source port: 1942 (1942)</b></div>
<div class="d " style="top:234px;height:14px"><b style="left:34px">Destination port: http (80)</b></div>
<div class="d " style="top:249px;height:14px"><b style="left:34px">Sequence number: 0    (relative sequence number)</b></div></div>
<div class="a" style="left:2px;top:381px;width:1257px;height:1px;background:#000"></div>
<div class="a" style="left:2px;top:381px;width:1px;height:262px;background:#000"></div>
<div class="a" style="left:1258px;top:381px;width:4px;height:262px;background:#f1f1f1"></div>
<div class="a" style="left:1262px;top:381px;width:1px;height:262px;background:#b8c4d0"></div>
<div class="a" style="left:1263px;top:381px;width:11px;height:262px;background:linear-gradient(90deg,#e4f4fc,#c8e8fa)"></div>
<div class="a" style="left:1263px;top:381px;width:11px;height:15px;background:linear-gradient(#eef4fa,#b8cce4);border-top:1px solid #c8d4e0;border-left:1px solid #a8b8c8;border-bottom:1px solid #98a8c0"></div>
<svg class="a" style="left:1263px;top:381px" width="11" height="15"><path d="M3 9 L7.5 4.5 L12 9" fill="none" stroke="#3c4c5c" stroke-width="2"/></svg>
<div class="a" style="left:1263px;top:411px;width:11px;height:164px;background:linear-gradient(90deg,#f4f8fa,#dceef8);border:1px solid #98a8b8;border-right:none;border-radius:2px 0 0 2px"></div>
<div class="a" style="left:1267px;top:490px;width:7px;height:1px;background:#6a7a8a;box-shadow:0 2px 0 #6a7a8a,0 4px 0 #6a7a8a"></div>
<div class="a" style="left:1263px;top:626px;width:11px;height:17px;background:linear-gradient(#eef4fa,#b8cce4);border-top:1px solid #a8b8c8;border-left:1px solid #a8b8c8;border-bottom:1px solid #98a8c0"></div>
<svg class="a" style="left:1263px;top:626px" width="11" height="17"><path d="M3 6.5 L7.5 11.0 L12 6.5" fill="none" stroke="#3c4c5c" stroke-width="2"/></svg>
<div class="a" style="left:2px;top:650px;width:1272px;height:73px;background:#fff;overflow:hidden"><div class="hs" style="left:97px;top:27px;width:336px"></div>
<div class="hs" style="left:473px;top:27px;width:120px"></div>
<div class="hs" style="left:49px;top:40px;width:336px"></div>
<div class="hs" style="left:457px;top:40px;width:120px"></div>
<div class="hx" style="left:1px;top:1px">0000  00 18 3f 7e f1 99 00 18  de 81 7f 4c 08 00 45 00   ..?~.... ...L..E.</div>
<div class="hx" style="left:1px;top:14px">0010  00 30 fa 95 40 00 80 06  95 51 c0 a8 01 4c cb 54   .0..@... .Q...L.T</div>
<div class="hx" style="left:1px;top:27px">0020  dd 97 07 96 00 50 1e 27  ba d8 00 00 00 00 70 02   .....P.&#x27; ......p.</div>
<div class="hx" style="left:1px;top:40px">0030  40 00 f7 58 00 00 02 04  05 b4 01 01 04 02         @..X.... ......</div>
<div class="hx" style="left:97px;top:27px;color:#fff">07 96 00 50 1e 27  ba d8 00 00 00 00 70 02</div>
<div class="hx" style="left:473px;top:27px;color:#fff">...P.&#x27; ......p.</div>
<div class="hx" style="left:49px;top:40px;color:#fff">40 00 f7 58 00 00 02 04  05 b4 01 01 04 02</div>
<div class="hx" style="left:457px;top:40px;color:#fff">@..X.... ......</div></div>
<div class="a" style="left:2px;top:650px;width:1272px;height:1px;background:#000"></div>
<div class="a" style="left:2px;top:650px;width:1px;height:73px;background:#000"></div>
<div class="a" style="left:2px;top:722px;width:1272px;height:1px;background:#e4e4e4"></div>
<div class="a" style="left:0;top:726px;width:639px;height:1px;background:#000"></div>
<div class="a" style="left:646px;top:726px;width:628px;height:1px;background:#000"></div>
<div class="a" style="left:646px;top:726px;width:1px;height:9px;background:#000"></div>
<div class="a" style="left:2px;top:726px;width:1px;height:9px;background:#000"></div>
<div class="t" style="left:3px;top:727px;letter-spacing:-0.1px">Transmission Control Protocol (tcp), 28 bytes</div>
<div class="t" style="left:650px;top:727px">P: 164 D: 164 M: 0 Drops: 0</div>
</body></html>
